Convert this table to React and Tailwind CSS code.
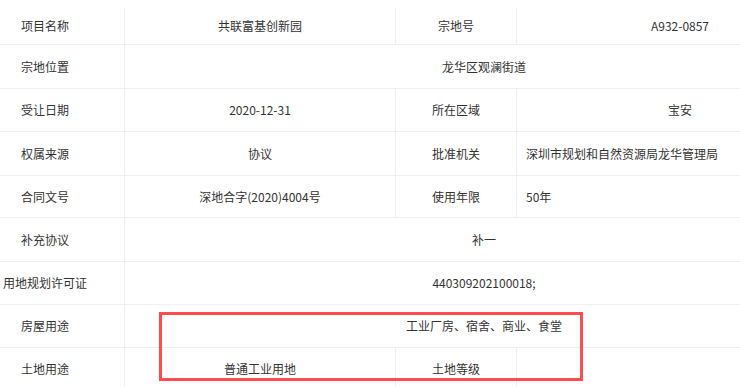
const ROWS = [
  { h: 'h-[37px]', label: '项目名称', cells: [{ v: '共联富基创新园' }, { v: '宗地号' }, { v: 'A932-0857' }] },
  { h: 'h-[44px]', label: '宗地位置', span: '龙华区观澜街道' },
  { h: 'h-[43px]', label: '受让日期', cells: [{ v: '2020-12-31' }, { v: '所在区域' }, { v: '宝安' }] },
  { h: 'h-[44px]', label: '权属来源', cells: [{ v: '协议' }, { v: '批准机关' }, { v: '深圳市规划和自然资源局龙华管理局', left: true }] },
  { h: 'h-[42px]', label: '合同文号', cells: [{ v: '深地合字(2020)4004号' }, { v: '使用年限' }, { v: '50年', left: true }] },
  { h: 'h-[44px]', label: '补充协议', span: '补一' },
  { h: 'h-[43px]', label: '用地规划许可证', span: '440309202100018;' },
  { h: 'h-[43px]', label: '房屋用途', span: '工业厂房、宿舍、商业、食堂' },
  { h: 'h-[43px]', label: '土地用途', cells: [{ v: '普通工业用地' }, { v: '土地等级' }, { v: '' }] },
]

const WIDTHS = ['w-[271px]', 'w-[121px]', 'w-[326px]']

function Row({ row }) {
  return (
    <div className={`flex ${row.h} border-b border-[#efefef]`}>
      <div className="w-[159px] shrink-0 flex items-center justify-center border-r border-[#efefef]">
        {row.label}
      </div>
      {row.span != null ? (
        <div className="flex-1 flex items-center justify-center">{row.span}</div>
      ) : (
        row.cells.map((c, i) => (
          <div
            key={i}
            className={`${WIDTHS[i]} shrink-0 flex items-center ${
              c.left ? 'justify-start pl-[9px]' : 'justify-center'
            } ${i < 2 ? 'border-r border-[#efefef]' : ''}`}
          >
            {c.v}
          </div>
        ))
      )}
    </div>
  )
}

export default function App() {
  return (
    <div
      className="relative w-[740px] h-[387px] overflow-hidden bg-white pt-[8px] text-[12px] text-[#333]"
      style={{ fontFamily: '"Noto Sans CJK SC", "Noto Sans", sans-serif' }}
    >
      <div className="ml-[-34px] w-[877px]">
        {ROWS.map((r) => (
          <Row key={r.label} row={r} />
        ))}
      </div>
      {/* annotation box */}
      <div className="absolute left-[159px] top-[312px] w-[424px] h-[69px] border-[3px] border-[#ff4d4f]" />
    </div>
  )
}
